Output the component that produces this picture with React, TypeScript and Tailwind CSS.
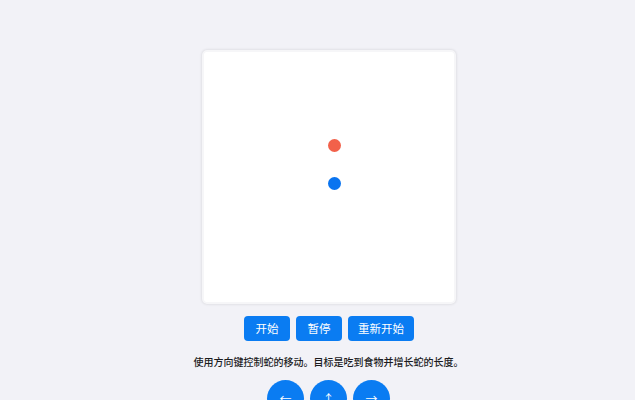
import { useState } from "react";

type Dir = "left" | "up" | "right";

const CELL = 13;

/** Small snake game screen: board, controls, hint and arrow pad. */
export default function App() {
  const [running, setRunning] = useState(false);
  const food = { x: 124.5, y: 86.5 };
  const snake = [{ x: 124.5, y: 124.5 }];

  const move = (d: Dir) => {
    void d;
  };

  return (
    <div
      className="min-h-screen bg-[#f2f2f7] pl-[22px] pt-[50px]"
      style={{ fontFamily: '"Noto Sans CJK SC", "Noto Sans", sans-serif' }}
    >
      <div className="flex flex-col items-center">
        <div className="relative h-[254px] w-[254px] rounded-[5px] border-2 border-[#f6f6f8] bg-white shadow-[0_0_3px_rgba(0,0,0,0.14)]">
          <div
            className="absolute rounded-full bg-[#f2614a]"
            style={{ left: food.x, top: food.y, width: CELL, height: CELL }}
          />
          {snake.map((s, i) => (
            <div
              key={i}
              className="absolute rounded-full bg-[#0a74f0]"
              style={{ left: s.x, top: s.y, width: CELL, height: CELL }}
            />
          ))}
        </div>

        <div className="mt-3 flex gap-[6px] pl-[1px]">
          <button
            onClick={() => setRunning(true)}
            className="h-[25px] w-[46px] rounded-[4px] bg-[#0a7cf2] text-[11.5px] leading-none text-white"
          >
            开始
          </button>
          <button
            onClick={() => setRunning(false)}
            className="h-[25px] w-[46px] rounded-[4px] bg-[#0a7cf2] text-[11.5px] leading-none text-white"
          >
            暂停
          </button>
          <button
            onClick={() => setRunning(!running)}
            className="h-[25px] w-[66px] rounded-[4px] bg-[#0a7cf2] text-[11.5px] leading-none text-white"
          >
            重新开始
          </button>
        </div>

        <p className="mt-[14px] text-[10px] font-medium leading-[14px] text-[#1c1c1e]">
          使用方向键控制蛇的移动。目标是吃到食物并增长蛇的长度。
        </p>

        <div className="mt-[11px] flex gap-[6px]">
          {(
            [
              ["left", "←"],
              ["up", "↑"],
              ["right", "→"],
            ] as [Dir, string][]
          ).map(([d, g]) => (
            <button
              key={d}
              onClick={() => move(d)}
              className="flex h-[37px] w-[37px] items-center justify-center rounded-full bg-[#0a7cf2] text-[12px] text-white"
            >
              {g}
            </button>
          ))}
        </div>
      </div>
    </div>
  );
}
